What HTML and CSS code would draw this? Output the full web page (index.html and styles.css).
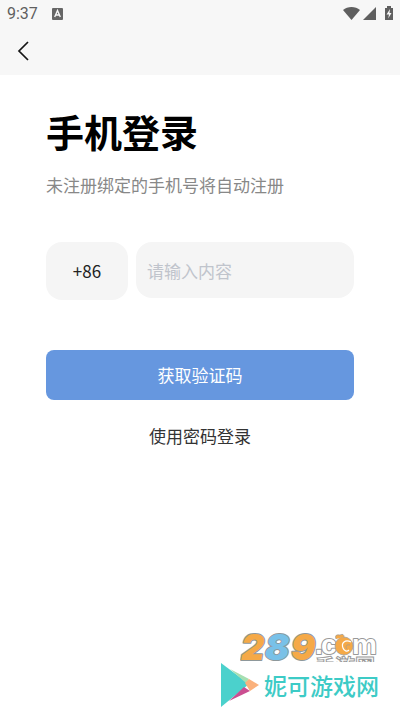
FILE: index.html
```html
<!DOCTYPE html>
<html lang="zh-CN">
<head>
<meta charset="utf-8">
<meta name="viewport" content="width=device-width, initial-scale=1">
<title>手机登录</title>
<link rel="stylesheet" href="styles.css">
</head>
<body>
<header class="top">
  <div class="status">
    <span class="clock">9:37</span>
    <svg class="badge" width="12" height="12" viewBox="0 0 12 12" aria-hidden="true"><rect width="11" height="12" rx="1" fill="#666"/><path d="M2.7 9 5.5 2.5 8.3 9M3.8 7h3.4" fill="none" stroke="#f7f7f7" stroke-width="1.4"/></svg>
    <svg class="signals" width="52" height="16" viewBox="0 0 52 16" aria-hidden="true">
      <g fill="#5f5f5f">
        <path d="M0 4C4.5 0 12.5 0 17 4L8.500 14Z"/>
        <path d="M33 1v13H20Z"/>
        <path d="M42 2h2V0h4v2h2v12h-8Z"/>
      </g>
      <path d="M47 3 43.500 8.500H46l-.8 4L48.500 7h-2Z" fill="#f7f7f7"/>
    </svg>
  </div>
  <button class="back" type="button" aria-label="返回"><svg width="12" height="20" viewBox="0 0 12 20" aria-hidden="true"><path d="M11 1 2 10l9 9" fill="none" stroke="#151515" stroke-width="1.7"/></svg></button>
</header>
<main class="login">
  <h1>手机登录</h1>
  <p class="hint">未注册绑定的手机号将自动注册</p>
  <form>
    <div class="fields">
      <button class="code" type="button" aria-label="国家区号 +86">+86</button>
      <input class="phone" type="tel" placeholder="请输入内容" aria-label="手机号">
    </div>
    <button class="submit" type="button">获取验证码</button>
  </form>
  <a class="alternate" href="#password">使用密码登录</a>
</main>
<footer class="brands">
  <svg class="brand-289" width="140" height="30" viewBox="0 0 140 30" role="img" aria-label="289.com 手游网">
    <text class="mobile" x="75" y="42">手游网</text>
    <g class="digits"><text x="1" y="28" fill="#f5a947">2</text><text x="51" y="28" fill="#f5a947">9</text><text x="25" y="28" fill="#78c1e8">8</text></g>
    <g class="domain"><text x="75" y="22">.</text><text x="81" y="22">c</text><text x="112" y="22">m</text></g>
    <circle cx="104" cy="14" r="9" fill="#f5a947" stroke="#999" stroke-width=".7"/>
    <path d="M96 7Q94 2 100 3Q104 1 104 5" fill="#f5a947" stroke="#999" stroke-width=".7"/>
    <path d="M111 10c-6-3-10 1-8 6 1 3 4 4 6 2" fill="none" stroke="#fff" stroke-width="1.2"/>
    <path d="M110 13c-4-1-5 2-3 4" fill="none" stroke="#999" stroke-width=".7"/>
  </svg>
  <div class="brand-nike">
    <svg width="40" height="46" viewBox="0 0 40 46" aria-hidden="true">
      <path d="M1 1 29 22 1 45Z" fill="#4bd1cc"/>
      <path d="M10 7 29 17 26 21Z" fill="#a7dfb1"/>
      <path d="M29 17 39 23 30 29 25 21Z" fill="#fab17c"/>
      <path d="M24 25 30 29 9 39Z" fill="#cb4e91"/>
    </svg>
    <span>妮可游戏网</span>
  </div>
</footer>
</body>
</html>
```

FILE: styles.css
```css
* {
  box-sizing: border-box;
}

body {
  margin: 0;
  min-height: 100vh;
  display: flex;
  flex-direction: column;
  background: #fff;
  color: #222;
  font-family: "Noto Sans CJK SC", sans-serif;
  font-size: 17px;
  line-height: 24px;
}

button,
input {
  border: 0;
  margin: 0;
  font: inherit;
}

.top {
  background: #f7f7f7;
  padding-bottom: 12px;
}

.status {
  display: flex;
  align-items: center;
  height: 28px;
  padding: 0 5px 0 7px;
}

.clock {
  color: #5f5f5f;
  font-family: Roboto, sans-serif;
  font-size: 16px;
}

.badge {
  margin-left: 14px;
}

.signals {
  margin-left: auto;
}

.back {
  display: flex;
  align-items: center;
  height: 35px;
  padding: 10px 17px 0;
  background: none;
}

.login {
  flex: 1;
  display: flex;
  flex-direction: column;
  padding: 30px 46px 0;
}

h1 {
  margin: 0;
  color: #000;
  font-size: 38px;
  line-height: 52px;
  font-weight: 700;
}

.hint {
  margin: 16px 0 0;
  color: #888;
  white-space: nowrap;
}

.fields {
  display: flex;
  gap: 8px;
  margin-top: 45px;
  align-items: flex-start;
}

.code,
.phone {
  border-radius: 16px;
  background: #f5f5f5;
}

.code {
  flex: none;
  width: 82px;
  height: 58px;
  padding: 0;
  color: #222;
}

.phone {
  flex: 1;
  min-width: 0;
  height: 56px;
  padding: 0 11px;
}

.phone::placeholder {
  color: #c0c4cc;
  opacity: 1;
}

.submit {
  display: block;
  width: 100%;
  height: 50px;
  margin-top: 50px;
  border-radius: 8px;
  background: #6697df;
  color: #fff;
}

.alternate {
  align-self: center;
  margin-top: 24px;
  color: #333;
  text-decoration: none;
}

.brands {
  display: flex;
  flex-direction: column;
  align-items: flex-end;
  padding: 0 21px 2px 0;
}

.brand-289 {
  display: block;
  margin-right: -1px;
}

.digits {
  font: italic 900 36px Inter, sans-serif;
  stroke: #8e989b;
  stroke-width: 2px;
  stroke-linejoin: round;
  paint-order: stroke;
}

.domain {
  font: 700 28px "Liberation Sans", sans-serif;
  fill: #fff;
  stroke: #999;
  stroke-width: 2px;
  stroke-linejoin: round;
  paint-order: stroke;
}

.mobile {
  font: 700 20px "Noto Sans CJK SC", sans-serif;
  fill: #fff;
  stroke: #999;
  stroke-width: 1px;
}

.brand-nike {
  display: flex;
  align-items: center;
  gap: 4px;
  color: #3dcbc6;
  font-size: 23px;
  line-height: 34px;
  font-weight: 500;
}
```
